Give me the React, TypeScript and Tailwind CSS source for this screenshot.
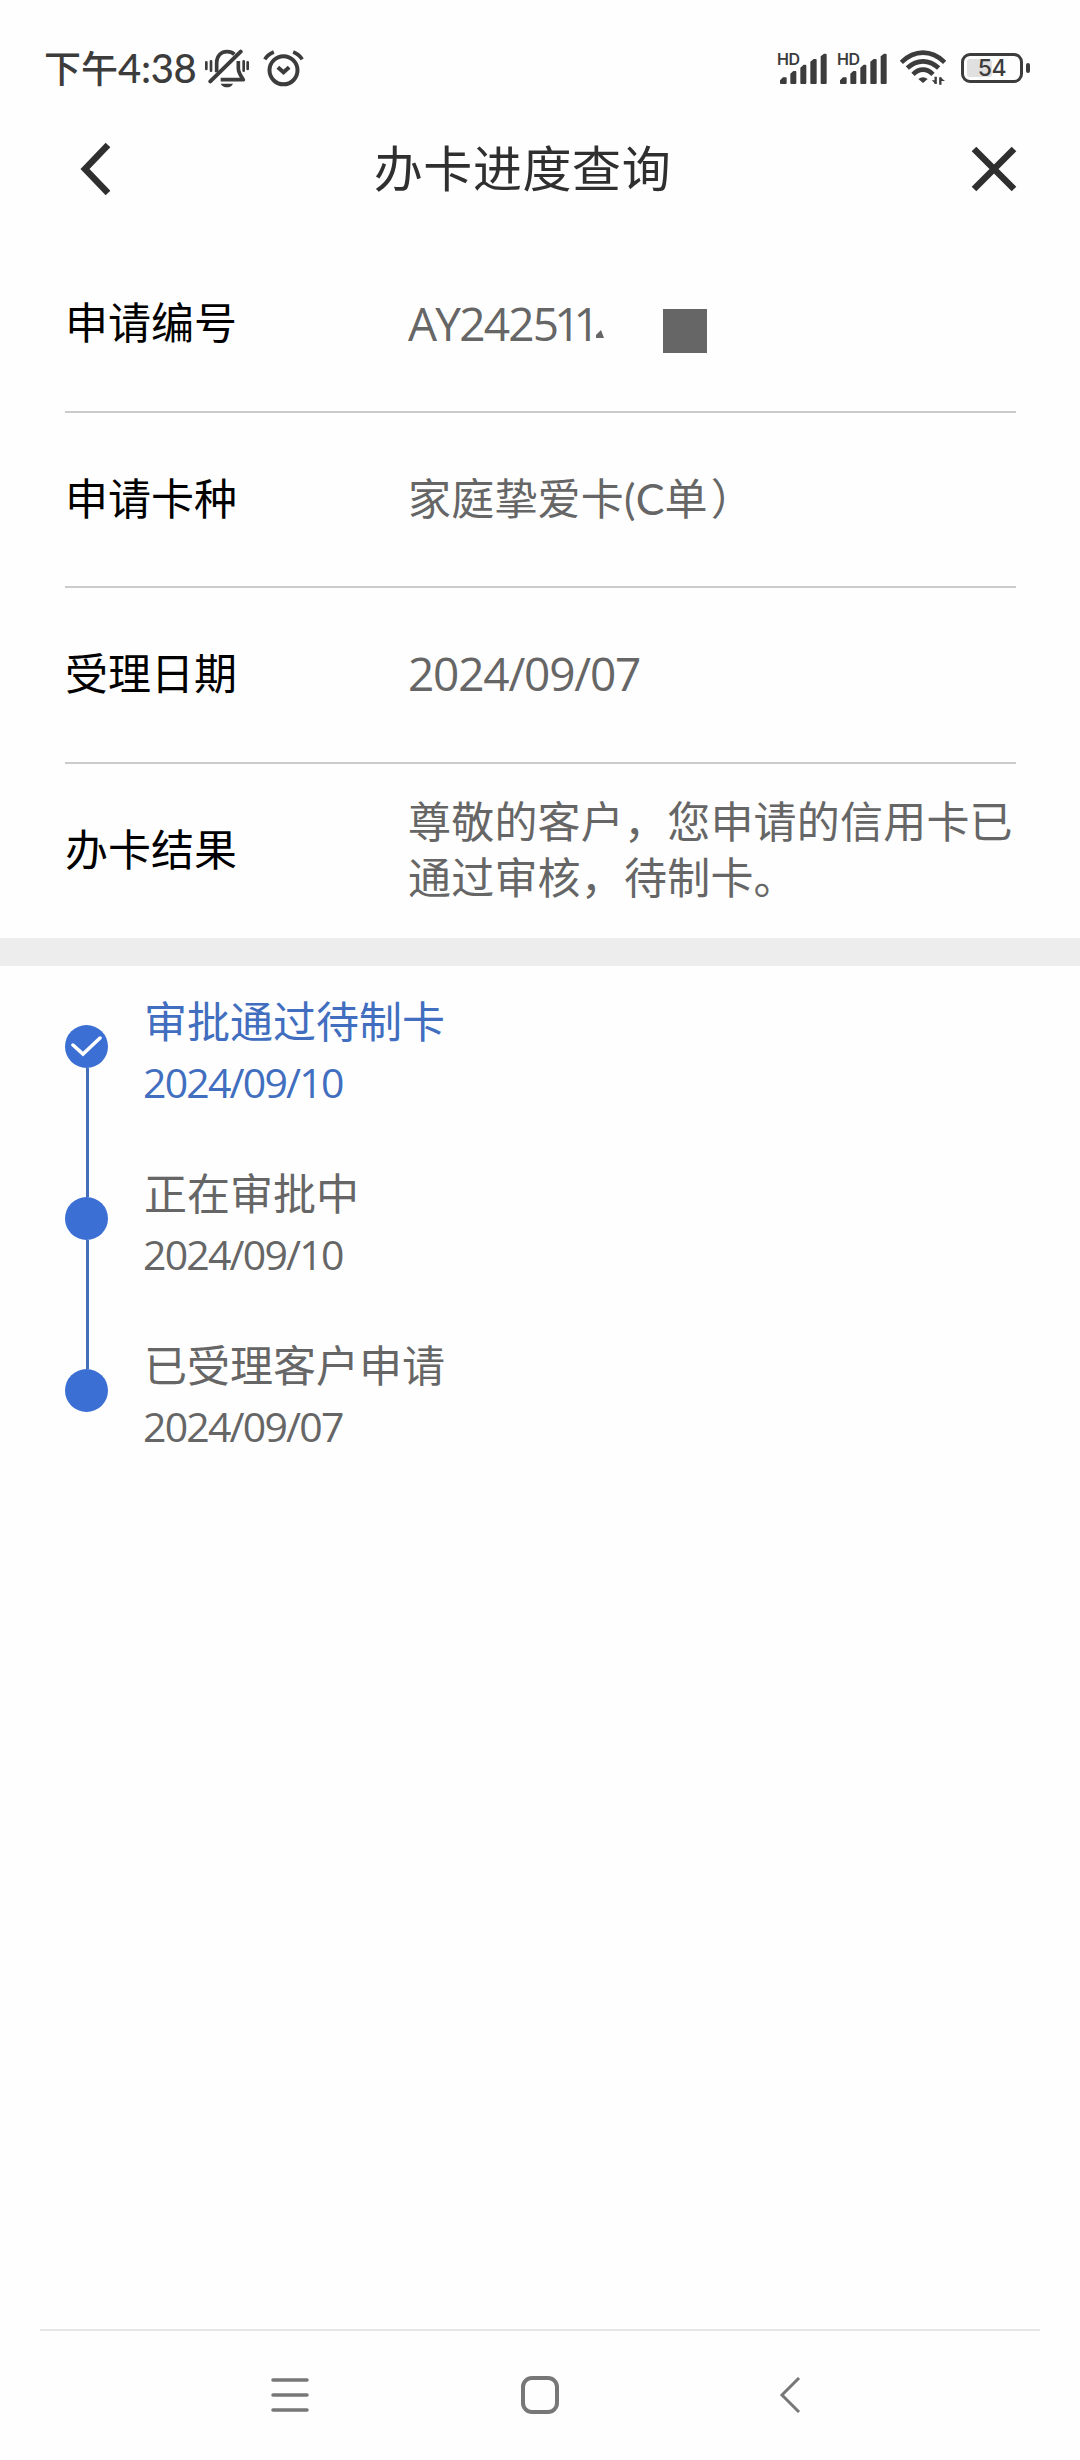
import type { ReactNode } from "react";

const steps = [
    { title: "审批通过待制卡", date: "2024/09/10", done: true },
    { title: "正在审批中", date: "2024/09/10", done: false },
    { title: "已受理客户申请", date: "2024/09/07", done: false },
];

function MutedBell() {
    return (
        <svg width="46" height="39" viewBox="0 0 138 117" fill="none" stroke="#3c3c3c" strokeWidth="11">
            <path d="M38 70V42C38 20 52 8 69 8c9 0 17 3 22 8" />
            <path d="M103 36v22c0 14 7 22 15 34H50" strokeLinejoin="round" />
            <path d="M110 8 19 97" strokeWidth="12" strokeLinecap="round" />
            <path d="M50 104h37c-4 8-10 11-18 11s-15-3-19-11z" fill="#3c3c3c" stroke="none" />
            <path d="M7 40v20M21 37v28M119 37v28M131 40v20" strokeWidth="8" strokeLinecap="round" />
        </svg>
    );
}

function AlarmClock() {
    return (
        <svg width="41" height="37" viewBox="0 0 122 111" fill="none" stroke="#3c3c3c" strokeWidth="12">
            <circle cx="61" cy="61" r="42" />
            <path d="M44 52 61 67 78 52" />
            <path d="M5 28Q14 13 32 6M117 28Q108 13 90 6" strokeWidth="11" />
        </svg>
    );
}

function Signal() {
    return (
        <div className="relative h-8 w-[50px]">
            <span className="absolute -top-px left-0 font-[Inter] text-[16px] leading-4 font-semibold tracking-[-0.4px]">HD</span>
            <svg className="absolute bottom-0 left-[3px]" width="47" height="31" viewBox="0 0 141 93" fill="#3c3c3c">
                <path d="M0 82 9 73h9q2 0 2 2v15q0 3-3 3H3q-3 0-3-3zM31 62l9-8h6q3 0 3 3v33q0 3-3 3H34q-3 0-3-3zM61 44l10-9h5q3 0 3 3v52q0 3-3 3H64q-3 0-3-3zM91 26l10-8h6q3 0 3 3v69q0 3-3 3H94q-3 0-3-3zM122 10l10-8h5q3 0 3 3v85q0 3-3 3h-12q-3 0-3-3z" />
            </svg>
        </div>
    );
}

function Wifi() {
    return (
        <svg width="46" height="36" viewBox="0 0 138 108" fill="none" stroke="#3c3c3c" strokeWidth="14">
            <path d="M4 37Q34 8 69 8t65 29" />
            <path d="M22 54Q44 34 69 34t47 20" />
            <path d="M39 73Q53 59 69 59t30 14" />
            <path d="M55 87q14-11 28 0L69 99z" fill="#3c3c3c" stroke="none" />
            <path d="M107 80v22M121 104V82" strokeWidth="7" />
            <path d="M107 102 95 91h12zM121 82l14 11h-14z" fill="#3c3c3c" stroke="none" />
        </svg>
    );
}

function Battery() {
    return (
        <div className="flex items-center gap-[3px]">
            <div className="relative flex h-[30px] w-[62px] items-center justify-center rounded-[9px] border-3 border-[#3c3c3c]">
                <div className="absolute top-[3px] bottom-[3px] left-[3px] w-[25px] rounded-[3px] bg-[#e0e0e0]" />
                <span className="relative font-[Inter] text-[23px] leading-none font-medium tracking-[-0.5px]">54</span>
            </div>
            <div className="h-2.5 w-1 rounded-xs bg-[#3c3c3c]" />
        </div>
    );
}

function InfoRow({ label, last, children }: { label: string; last?: boolean; children: ReactNode }) {
    return (
        <div className={`flex items-center ${last ? "h-[174px] pb-0.5" : "h-[175.7px] border-b-2 border-[#cbcbcb] pb-0.5"}`}>
            <div className="w-[343px] shrink-0 text-[43px] leading-[56px] text-black">{label}</div>
            <div className="grow text-[43px] leading-[56px] tracking-[0.2px] whitespace-nowrap">{children}</div>
        </div>
    );
}

export default function App() {
    return (
        <div className="flex h-[2460px] w-[1080px] flex-col bg-[#fefefe] font-[Lato,'Noto_Sans_CJK_SC',sans-serif] text-[#666]">
            <div className="flex h-[136px] shrink-0 items-center justify-between pr-[50px] pl-[44px] text-[#3c3c3c]">
                <div className="flex items-center">
                    <span className="w-[160px] text-[37px] leading-none font-medium whitespace-nowrap">
                        下午<span className="text-[40px] tracking-[-0.3px]">4:38</span>
                    </span>
                    <MutedBell />
                    <span className="ml-[13px]">
                        <AlarmClock />
                    </span>
                </div>
                <div className="flex items-center">
                    <Signal />
                    <span className="ml-2.5">
                        <Signal />
                    </span>
                    <span className="mr-[15px] ml-[13px]">
                        <Wifi />
                    </span>
                    <Battery />
                </div>
            </div>

            <header className="flex h-[66px] shrink-0 items-center justify-between pr-[63px] pl-[79px] text-[#2f2f2f]">
                <svg width="34" height="54" viewBox="0 0 34 54" fill="none" stroke="currentColor" strokeWidth="6.5">
                    <path d="M29 3 6 27l23 24" />
                </svg>
                <h1 className="mr-[39px] pb-px text-[49px] leading-none tracking-[0.6px]">办卡进度查询</h1>
                <svg width="46" height="46" viewBox="0 0 46 46" fill="none" stroke="currentColor" strokeWidth="6.5">
                    <path d="M3 3 43 43M43 3 3 43" />
                </svg>
            </header>

            <section className="mt-[35px] shrink-0 pr-16 pl-[65px]">
                <InfoRow label="申请编号">
                    <div className="flex items-center">
                        <span className="font-['Open_Sans'] text-[46px] tracking-[-1.8px]">AY2425</span>
                        <span className="-ml-[3px] font-['Open_Sans'] text-[46px] tracking-[-7px]">11</span>
                        <svg className="mt-[23px] ml-[3px]" width="8" height="8" viewBox="0 0 8 8" fill="#666">
                            <path d="M0 5 5 0 8 8H0z" />
                        </svg>
                        <div className="mt-[17px] ml-[59px] h-11 w-11 bg-[#666]" />
                    </div>
                </InfoRow>
                <InfoRow label="申请卡种">
                    家庭挚爱卡(C单<span className="ml-[3px]">）</span>
                </InfoRow>
                <InfoRow label="受理日期">
                    <span className="font-['Open_Sans'] text-[46px] tracking-[-1.2px]">2024/09/07</span>
                </InfoRow>
                <InfoRow label="办卡结果" last>
                    尊敬的客户，您申请的信用卡已
                    <br />
                    通过审核，待制卡。
                </InfoRow>
            </section>

            <div className="h-7 shrink-0 bg-[#ededed]" />

            <ol className="flex grow flex-col pt-[25px] pl-[65px]">
                {steps.map((step, index) => (
                    <li key={index} className="flex h-[172px] gap-[35px]">
                        <div className="flex w-[43px] flex-col items-center pt-[34px]">
                            <div className="flex h-[43px] w-[43px] shrink-0 items-center justify-center rounded-full bg-[#3b6fd4]">
                                {step.done && (
                                    <svg width="31" height="22" viewBox="0 0 31 22" fill="none" stroke="white" strokeWidth="3.5">
                                        <path d="m2 9 10 9L29 2" strokeLinecap="round" />
                                    </svg>
                                )}
                            </div>
                            {index < steps.length - 1 && <div className="-mb-[34px] ml-[2px] w-[3px] grow bg-[#426fb8]" />}
                        </div>
                        <div className={step.done ? "text-[#416ebf]" : ""}>
                            <div className="pl-px text-[43px] leading-[61px]">{step.title}</div>
                            <div className="font-['Open_Sans'] text-[41px] leading-[60px] tracking-[-1.8px]">{step.date}</div>
                        </div>
                    </li>
                ))}
            </ol>

            <nav className="mx-10 flex h-[131px] shrink-0 items-center border-t-2 border-[#e6e6e6] pb-px pl-[231px]">
                <svg width="38" height="34" viewBox="0 0 38 34" stroke="#777" strokeWidth="3.5" strokeLinecap="round">
                    <path d="M2 2h34M2 17h34M2 32h34" />
                </svg>
                <div className="ml-[212px] h-[38px] w-[38px] rounded-[11px] border-4 border-[#777]" />
                <svg className="ml-[220px]" width="22" height="36" viewBox="0 0 22 36" fill="none" stroke="#777" strokeWidth="3">
                    <path d="M20 1 3 18l17 17" />
                </svg>
            </nav>
        </div>
    );
}
